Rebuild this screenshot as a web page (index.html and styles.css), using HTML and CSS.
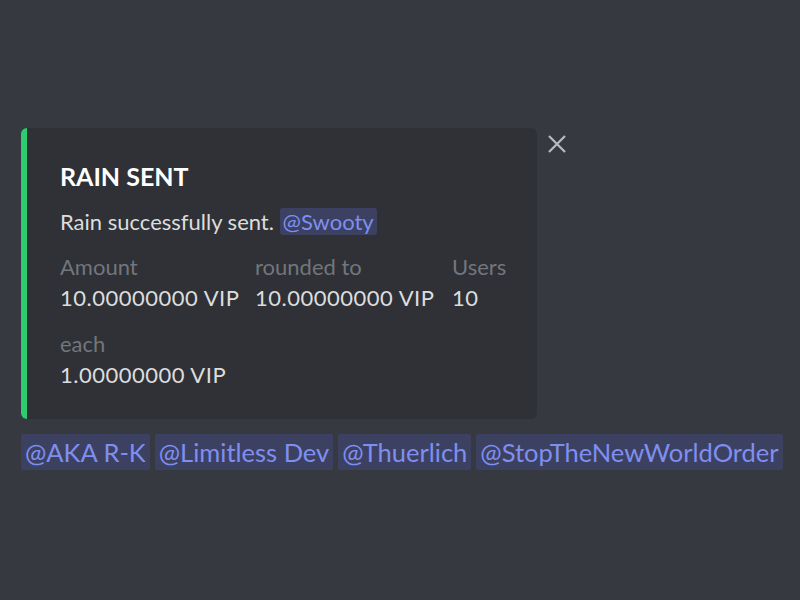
FILE: index.html
```html
<!DOCTYPE html>
<html>
<head>
<meta charset="utf-8">
<link rel="stylesheet" href="styles.css">
</head>
<body>
<div class="page">
  <div class="row">
    <div class="embed">
      <div class="bar"></div>
      <div class="content">
        <div class="title">RAIN SENT</div>
        <div class="desc">Rain successfully sent. <span class="mention">@Swooty</span></div>
        <div class="fields">
          <div class="field"><div class="fname">Amount</div><div class="fval">10.00000000 VIP</div></div>
          <div class="field"><div class="fname">rounded to</div><div class="fval">10.00000000 VIP</div></div>
          <div class="field"><div class="fname">Users</div><div class="fval">10</div></div>
          <div class="field"><div class="fname">each</div><div class="fval">1.00000000 VIP</div></div>
        </div>
      </div>
    </div>
    <svg class="close" width="20" height="20" viewBox="0 0 20 20"><path d="M2 2L18 18M18 2L2 18" stroke="#b9bbbe" stroke-width="2.2" fill="none"/></svg>
  </div>
  <div class="mentions">
    <span class="mention big">@AKA R-K</span>
    <span class="mention big">@Limitless Dev</span>
    <span class="mention big">@Thuerlich</span>
    <span class="mention big">@StopTheNewWorldOrder</span>
  </div>
</div>
</body>
</html>
```
FILE: styles.css
```css
html, body {
  margin: 0;
  background: #36393f;
  height: 100%;
  overflow: hidden;
}
body {
  font-family: Lato, "Open Sans", sans-serif;
  color: #dcddde;
}
.page {
  padding: 128px 0 0 21px;
}
.row {
  display: flex;
  align-items: flex-start;
}
.embed {
  width: 516px;
  height: 291px;
  display: flex;
  background: #2f3136;
  border-radius: 6px;
  overflow: hidden;
}
.bar {
  width: 6px;
  background: #2ecc71;
  flex: none;
}
.content {
  padding: 33px 0 0 33px;
}
.title {
  font-size: 25px;
  font-weight: 700;
  color: #ffffff;
  line-height: 30px;
}
.desc {
  margin-top: 16px;
  font-size: 22px;
  line-height: 30px;
}
.mention {
  background: #3c4162;
  color: #7f8ff0;
  padding: 0 3px;
  border-radius: 3px;
}
.fields {
  margin-top: 15px;
  display: grid;
  grid-template-columns: 195px 197px 60px;
  row-gap: 15px;
}
.fname {
  font-size: 22px;
  color: #72767d;
  line-height: 30px;
}
.fval {
  font-size: 22px;
  line-height: 32px;
  letter-spacing: 0.5px;
}
.close {
  margin: 6px 0 0 10px;
}
.mentions {
  margin-top: 15px;
  display: flex;
  gap: 5px;
}
.mention.big {
  font-size: 25.5px;
  line-height: 36px;
  padding: 0 4px;
  border-radius: 2px;
}
```
